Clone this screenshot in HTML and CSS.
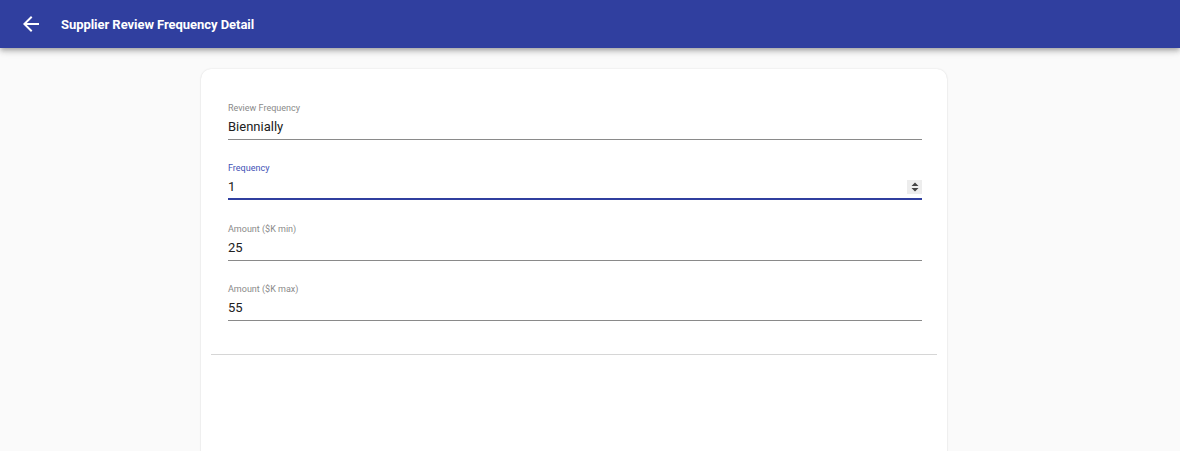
FILE: index.html
```html
<!DOCTYPE html>
<html>
<head>
<meta charset="utf-8">
<link rel="stylesheet" href="styles.css">
</head>
<body>
<header class="toolbar">
  <button class="back" aria-label="Back">
    <svg viewBox="0 0 24 24" width="24" height="24"><path fill="#fff" d="M20 11H7.83l5.59-5.59L12 4l-8 8 8 8 1.41-1.41L7.83 13H20v-2z"/></svg>
  </button>
  <h1 class="title">Supplier Review Frequency Detail</h1>
</header>
<main class="page">
  <section class="card">
    <div class="form">
      <div class="field">
        <label class="label">Review Frequency</label>
        <div class="value">Biennially</div>
      </div>
      <div class="field focused">
        <label class="label">Frequency</label>
        <div class="value"><span>1</span><span class="spinner"><svg viewBox="0 0 14 12" width="14" height="12"><path fill="#444" d="M7 1.5L10.5 5h-7zM7 10.5L3.5 7h7z"/></svg></span></div>
      </div>
      <div class="field">
        <label class="label">Amount ($K min)</label>
        <div class="value">25</div>
      </div>
      <div class="field lowered">
        <label class="label">Amount ($K max)</label>
        <div class="value">55</div>
      </div>
    </div>
    <hr class="divider">
  </section>
</main>
</body>
</html>
```
FILE: styles.css
```css
html, body {
  margin: 0;
  padding: 0;
  height: 100%;
  overflow: hidden;
}
body {
  background: #fafafa;
  font-family: Roboto, "Liberation Sans", sans-serif;
  color: #212121;
}
.toolbar {
  height: 48px;
  background: #303f9f;
  display: flex;
  align-items: center;
  padding-left: 19px;
  box-shadow: 0 2px 4px -1px rgba(0,0,0,.2), 0 4px 5px 0 rgba(0,0,0,.14), 0 1px 10px 0 rgba(0,0,0,.12);
  position: relative;
  z-index: 2;
}
.back {
  width: 24px;
  height: 24px;
  padding: 0;
  border: 0;
  background: none;
  display: flex;
}
.title {
  margin: 0 0 0 18px;
  color: #fff;
  font-size: 13px;
  font-weight: 700;
  letter-spacing: -0.05px;
}
.page {
  display: flex;
  justify-content: center;
  padding-top: 21px;
  padding-right: 32px;
}
.card {
  width: 746px;
  height: 400px;
  background: #fff;
  border-radius: 10px;
  box-shadow: 0 0 2px rgba(0,0,0,.12), 0 1px 2px rgba(0,0,0,.06);
  padding: 33px 10px 0;
  box-sizing: border-box;
}
.form {
  padding: 0 15px 0 17px;
  display: flex;
  flex-direction: column;
  gap: 22px;
}
.field {
  display: flex;
  flex-direction: column;
}
.focused + .field {
  margin-top: 1px;
}
.label {
  font-size: 9px;
  color: #8a8a8a;
  line-height: 12px;
  height: 12px;
}
.focused .label {
  color: #3f51b5;
}
.value {
  font-size: 13px;
  line-height: 18px;
  padding: 4px 0 3px;
  border-bottom: 1px solid #8a8a8a;
  display: flex;
  justify-content: space-between;
  align-items: center;
}
.focused .value {
  border-bottom: 2px solid #303f9f;
  padding-bottom: 2px;
}
.spinner {
  width: 15px;
  height: 14px;
  background: #ededed;
  display: flex;
  align-items: center;
  justify-content: center;
}
.divider {
  margin: 33px 0 0;
  border: 0;
  border-top: 1px solid #d6d6d6;
}
```
